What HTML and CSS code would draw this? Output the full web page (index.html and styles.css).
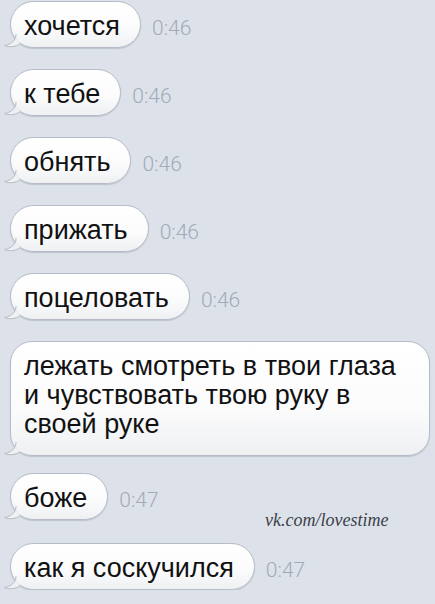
FILE: index.html
```html
<!DOCTYPE html>
<html lang="ru">
<head>
    <meta charset="UTF-8">
    <meta name="viewport" content="width=device-width, initial-scale=1.0">
    <title>Сообщения</title>
    <link rel="stylesheet" href="styles.css">
</head>
<body>
    <div class="chat">
        <div class="msg">
            <div class="bubble">хочется<svg class="tail" viewBox="0 0 16 14"><path d="M13 0 C13 6 9 10 1.5 11.5 C6 13.5 12 13 17 10" /></svg></div>
            <span class="time">0:46</span>
        </div>
        <div class="msg">
            <div class="bubble">к тебе<svg class="tail" viewBox="0 0 16 14"><path d="M13 0 C13 6 9 10 1.5 11.5 C6 13.5 12 13 17 10" /></svg></div>
            <span class="time">0:46</span>
        </div>
        <div class="msg">
            <div class="bubble">обнять<svg class="tail" viewBox="0 0 16 14"><path d="M13 0 C13 6 9 10 1.5 11.5 C6 13.5 12 13 17 10" /></svg></div>
            <span class="time">0:46</span>
        </div>
        <div class="msg">
            <div class="bubble">прижать<svg class="tail" viewBox="0 0 16 14"><path d="M13 0 C13 6 9 10 1.5 11.5 C6 13.5 12 13 17 10" /></svg></div>
            <span class="time">0:46</span>
        </div>
        <div class="msg">
            <div class="bubble">поцеловать<svg class="tail" viewBox="0 0 16 14"><path d="M13 0 C13 6 9 10 1.5 11.5 C6 13.5 12 13 17 10" /></svg></div>
            <span class="time">0:46</span>
        </div>
        <div class="msg msg-long">
            <div class="bubble bubble-long">лежать смотреть в твои глаза и чувствовать твою руку в своей руке<svg class="tail" viewBox="0 0 16 14"><path d="M13 0 C13 6 9 10 1.5 11.5 C6 13.5 12 13 17 10" /></svg></div>
        </div>
        <div class="msg">
            <div class="bubble">боже<svg class="tail" viewBox="0 0 16 14"><path d="M13 0 C13 6 9 10 1.5 11.5 C6 13.5 12 13 17 10" /></svg></div>
            <span class="time">0:47</span>
        </div>
        <div class="msg msg-last">
            <div class="bubble">как я соскучился<svg class="tail" viewBox="0 0 16 14"><path d="M13 0 C13 6 9 10 1.5 11.5 C6 13.5 12 13 17 10" /></svg></div>
            <span class="time">0:47</span>
        </div>
        <!-- watermark over the chat -->
        <span class="watermark">vk.com/lovestime</span>
    </div>
</body>
</html>
```

FILE: styles.css
```css
body {
    margin: 0;
    background-color: #dde2ea;
    font-family: "Liberation Sans", Arial, sans-serif;
    color: #111;
}
.chat {
    position: relative;
    display: flex;
    flex-direction: column;
    gap: 21px;
    padding: 1px 5px 0 10px;
}
.msg {
    display: flex;
    align-items: baseline;
    gap: 11px;
}
.msg-long {
    margin-bottom: -4px;
}
.msg-last {
    margin-top: 2px;
}
.bubble {
    position: relative;
    height: 47px;
    padding: 3px 20px 0 13px;
    box-sizing: border-box;
    font-size: 27px;
    line-height: 42px;
    white-space: nowrap;
    background: linear-gradient(#ffffff, #fbfbfc 60%, #eef0f2);
    border: 1px solid #b6bcc7;
    border-radius: 24px;
    box-shadow: 0 1px 1px rgba(90, 100, 120, 0.25);
}
.bubble-long {
    height: auto;
    max-width: 420px;
    padding: 10px 22px 16px 13px;
    line-height: 29px;
    white-space: normal;
    border-radius: 22px;
}
.tail {
    position: absolute;
    left: -8px;
    bottom: -1px;
    width: 16px;
    height: 14px;
    overflow: visible;
}
.tail path {
    fill: #eef0f2;
    stroke: #b6bcc7;
    stroke-width: 1;
}
.time {
    font-family: Roboto, "Liberation Sans", sans-serif;
    font-weight: 300;
    font-size: 21px;
    color: #a2aab8;
}
.watermark {
    position: absolute;
    left: 265px;
    top: 511px;
    font-family: "Liberation Serif", serif;
    font-style: italic;
    font-size: 18px;
    line-height: 18px;
    color: #3c4049;
}
```
